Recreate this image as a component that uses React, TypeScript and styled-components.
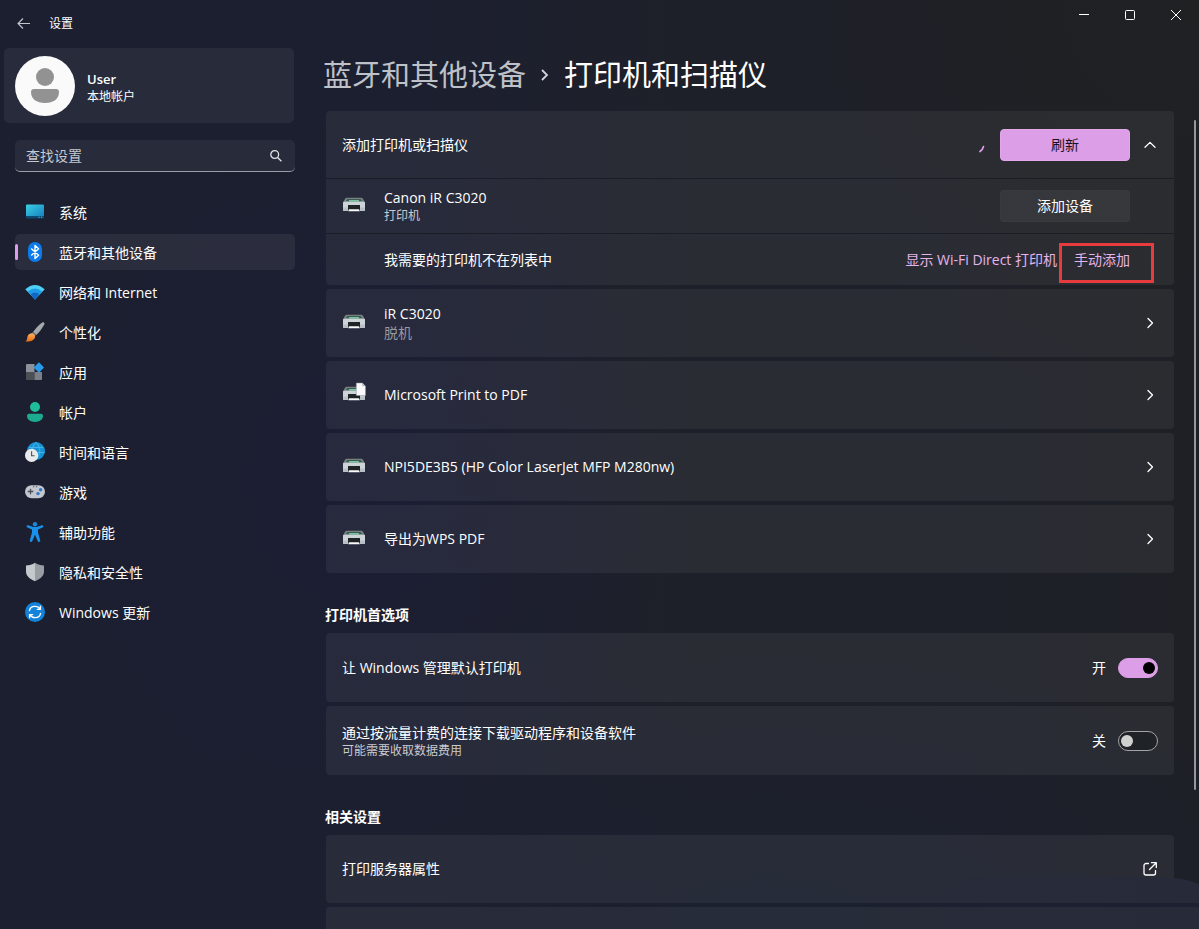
import React, { useState } from "react";
import styled, { createGlobalStyle } from "styled-components";

const colors = {
  text: "#ffffff",
  muted: "#c9cad0",
  dim: "#9798a2",
  accent: "#dc9ee6",
  link: "#e6b4ec",
  card: "rgba(255, 255, 255, 0.055)",
  line: "#1b1d26",
  mark: "#e83b3e",
};

const GlobalStyle = createGlobalStyle`
  *, *::before, *::after { box-sizing: border-box; }
  body {
    margin: 0;
    background: #1d1f2a;
    color: ${colors.text};
    font-family: "Open Sans", "Noto Sans CJK SC", sans-serif;
    font-size: 14px;
    line-height: 20px;
  }
  button, input { font: inherit; color: inherit; }
  h1, h2, p, ul { margin: 0; padding: 0; }
`;

const Window = styled.div`
  position: relative;
  display: flex;
  flex-direction: column;
  height: 100vh;
  overflow: hidden;
  background:
    radial-gradient(ellipse 50% 30% at 64% 100%, rgba(27, 32, 48, 0.9), transparent),
    radial-gradient(ellipse 26% 40% at 30% 52%, rgba(27, 29, 54, 0.6), transparent),
    radial-gradient(ellipse 35% 45% at 100% 0%, rgba(32, 33, 35, 1), transparent),
    linear-gradient(90deg, #1b1f30 0%, #1c1f2f 35%, #1e2029 58%, #1e2029 80%, #1e2026 100%);
`;

const TitleBar = styled.header`
  display: flex;
  justify-content: space-between;
  flex: none;
  height: 48px;
  padding-left: 12px;
`;

const TitleGroup = styled.div`
  display: flex;
  align-items: center;
  gap: 14px;
  font-size: 12px;
`;

const IconButton = styled.button<{ $width: number; $height: number }>`
  display: flex;
  align-items: center;
  justify-content: center;
  width: ${(p) => p.$width}px;
  height: ${(p) => p.$height}px;
  padding: 0;
  border: 0;
  background: none;
`;

const WindowControls = styled.div`
  display: flex;
`;

const Body = styled.div`
  display: flex;
  flex: 1;
  min-height: 0;
`;

const Sidebar = styled.aside`
  flex: none;
  width: 295px;
  padding-left: 15px;
`;

const Profile = styled.button`
  display: flex;
  align-items: center;
  gap: 12px;
  width: 290px;
  height: 75px;
  margin-left: -11px;
  padding: 0 11px;
  border: 0;
  border-radius: 5px;
  background: ${colors.card};
  text-align: left;
`;

const ProfileText = styled.span`
  display: flex;
  flex-direction: column;
  padding-top: 4px;
  font-size: 12px;
  line-height: 17px;

  strong { font-size: 13px; font-weight: 600; }
`;

const SearchBox = styled.label`
  display: flex;
  align-items: center;
  height: 32px;
  margin: 17px 0 22px;
  padding: 0 11px;
  border-bottom: 1px solid #9a9ca8;
  border-radius: 5px;
  background: ${colors.card};

  input {
    flex: 1;
    min-width: 0;
    padding: 0;
    border: 0;
    outline: 0;
    background: none;
  }
  input::placeholder { color: #c6c8d0; opacity: 1; }
`;

const NavList = styled.ul`
  display: flex;
  flex-direction: column;
  gap: 4px;
  list-style: none;
`;

const NavLink = styled.a<{ $active: boolean }>`
  position: relative;
  display: flex;
  align-items: center;
  gap: 14px;
  height: 36px;
  padding: 0 10px;
  border-radius: 5px;
  background: ${(p) => (p.$active ? "rgba(255, 255, 255, 0.065)" : "none")};
  color: inherit;
  text-decoration: none;

  span { padding-top: 2px; }

  &::before {
    content: "";
    display: ${(p) => (p.$active ? "block" : "none")};
    position: absolute;
    left: 0;
    top: 10px;
    width: 3px;
    height: 16px;
    border-radius: 2px;
    background: ${colors.accent};
  }
`;

const Main = styled.main`
  display: flex;
  flex-direction: column;
  flex: 1;
  min-width: 0;
  padding: 0 25px 0 31px;
`;

const Breadcrumb = styled.h1`
  display: flex;
  align-items: center;
  gap: 13px;
  flex: none;
  height: 63px;
  margin-left: -3px;
  padding-bottom: 10px;
  font-size: 29px;
  font-weight: 400;
  line-height: 40px;

  a { color: #bfc1c9; text-decoration: none; }
`;

const Stack = styled.section`
  display: flex;
  flex-direction: column;
  flex: none;
  gap: 4px;
`;

const SectionTitle = styled.h2`
  flex: none;
  margin-left: -1px;
  padding: 32px 0 8px;
  font-size: 14px;
  font-weight: 700;
  line-height: 20px;
`;

const Card = styled.div`
  flex: none;
  border-radius: 4px;
  background: ${colors.card};
`;

const Row = styled.div<{ $height: number; $inset?: boolean; $divided?: boolean }>`
  display: flex;
  align-items: center;
  height: ${(p) => p.$height}px;
  padding: 0 ${(p) => (p.$inset ? 44 : 16)}px 0 16px;
  border-bottom: ${(p) => (p.$divided ? `1px solid ${colors.line}` : "0")};
`;

const IconSlot = styled.span`
  display: flex;
  align-items: flex-start;
  flex: none;
  width: 24px;
  height: 30px;
  margin-right: 18px;
`;

const RowText = styled.div`
  flex: 1;
  min-width: 0;
`;

const Note = styled.p<{ $large?: boolean }>`
  color: ${(p) => (p.$large ? colors.dim : colors.muted)};
  font-size: ${(p) => (p.$large ? 14 : 12)}px;
  line-height: ${(p) => (p.$large ? 18 : 16)}px;
`;

const Actions = styled.div`
  display: flex;
  align-items: center;
  gap: 12px;
`;

const Links = styled.div`
  display: flex;
  gap: 17px;

  a { position: relative; color: ${colors.link}; text-decoration: none; }
`;

const Highlight = styled.span`
  position: absolute;
  inset: -7px -24px -13px -15px;
  border: 3px solid ${colors.mark};
`;

const PushButton = styled.button<{ $primary?: boolean }>`
  width: 130px;
  height: 32px;
  padding: 0;
  border: 1px solid ${(p) => (p.$primary ? "#e0a8e9" : "rgba(255, 255, 255, 0.02)")};
  border-radius: 4px;
  background: ${(p) => (p.$primary ? colors.accent : "rgba(255, 255, 255, 0.055)")};
  color: ${(p) => (p.$primary ? "#1a101c" : colors.text)};
`;

const SwitchLabel = styled.label`
  display: flex;
  align-items: center;
  gap: 12px;

  input {
    appearance: none;
    display: flex;
    align-items: center;
    width: 40px;
    height: 20px;
    margin: 0;
    padding: 0 2px;
    border: 1px solid #a2a4a8;
    border-radius: 10px;
    background: #1f2227;
  }
  input::before {
    content: "";
    width: 12px;
    height: 12px;
    border-radius: 50%;
    background: #cfd1d1;
  }
  input:checked {
    justify-content: flex-end;
    border-color: ${colors.accent};
    background: ${colors.accent};
  }
  input:checked::before { background: #000000; }
`;

const ScrollThumb = styled.div`
  position: absolute;
  top: 120px;
  right: 3px;
  bottom: 139px;
  width: 2px;
  border-radius: 1px;
  background: #97989c;
`;

const CornerGlow = styled.svg`
  position: absolute;
  right: 0;
  bottom: 0;
  pointer-events: none;
`;

const Chevron = ({ d }: { d: string }) => (
  <svg width="16" height="16" viewBox="0 0 16 16" fill="none" stroke="#fff" strokeWidth="1.3" strokeLinecap="round" strokeLinejoin="round" aria-hidden="true">
    <path d={d} />
  </svg>
);

const RIGHT = "M6 3.5 10.5 8 6 12.5";
const UP = "M3 10.3 8 5.4 13 10.3";

const Printer = ({ page }: { page?: boolean }) => (
  <svg width="24" height="28" viewBox="0 0 24 28" aria-hidden="true">
    <path d="M4.500 6.800h15a1.500 1.500 0 0 1 1.300.8L23 11.500H1l2.200-3.900a1.500 1.500 0 0 1 1.300-.8z" fill="#75827f" />
    <path d="M5.500 8h13l1.500 2H4z" fill="#3d5a52" />
    <path d="M7 9.200h10v1.200H7z" fill="#82e0b6" />
    <path d="M2 10.800h20a1 1 0 0 1 1 1V19a1 1 0 0 1-1 1H2a1 1 0 0 1-1-1v-7.200a1 1 0 0 1 1-1z" fill="#cdd4d8" />
    <path d="M1 16.500h22V19a1 1 0 0 1-1 1H2a1 1 0 0 1-1-1z" fill="#b9c0c6" />
    <path d="M6 14h12v6H6z" fill="#202427" />
    <path d="M7 18.300h10l.8 1.900H6.200z" fill="#f8fafa" />
    {page && <path d="M14.300 3h6l3.200 3.200v9.300h-9.200z" fill="#fafafa" stroke="#8b9096" strokeWidth=".5" />}
    {page && <path d="M20.300 3v3.200h3.200z" fill="#b9bdc2" />}
  </svg>
);

const navIcons: Record<string, React.ReactNode> = {
  system: (
    <>
      <path d="M2 2.500h16a1 1 0 0 1 1 1V15H1V3.500a1 1 0 0 1 1-1z" fill="url(#screen)" />
      <path d="M1 14h18v1.500a1 1 0 0 1-1 1H2a1 1 0 0 1-1-1z" fill="#0c4a70" />
      <path d="M13.500 14.700h1.200v1h-1.200zM16 14.700h1.200v1H16z" fill="#42c5ef" />
    </>
  ),
  bluetooth: (
    <>
      <rect x="3" y="0" width="14" height="20" rx="7" fill="#0a7cec" />
      <path d="m6.200 6.600 7.400 6.600L10 16.500v-13l3.600 3.300-7.400 6.600" fill="none" stroke="#fff" strokeWidth="1.400" strokeLinejoin="round" />
    </>
  ),
  network: (
    <>
      <path d="M.3 7.200Q10-1.400 19.700 7.200L10 17.500z" fill="#4ed0f5" />
      <path d="M2.900 9.600Q10 3.600 17.100 9.600L10 17.500z" fill="#1e9be6" />
      <path d="M5.600 12.400Q10 8.800 14.400 12.400L10 17.500z" fill="#1267c4" />
    </>
  ),
  personal: (
    <>
      <path d="M18.800.5c.8.500.9 1.300.4 2.200-2.500 4.300-5.300 8-8 10.300L8 10C10.800 6.200 14.300 2.700 17.200.6c.6-.4 1.100-.4 1.600-.1z" fill="#a5a8ab" />
      <path d="m8 10 3.200 3-1.400 1.300-3.300-3z" fill="#6d7176" />
      <path d="M6.700 11.200c2 0 3.800 1.700 3.300 4.100-.6 3.200-5.200 4.800-9.700 4.200 2.500-1.500 1.600-3.500 2.500-5.700.7-1.700 2.200-2.600 3.900-2.600z" fill="url(#paint)" />
    </>
  ),
  apps: (
    <>
      <path d="M2 2h7.500v8H1V3a1 1 0 0 1 1-1z" fill="#8c929b" />
      <path d="M1 10h8.500v8H2a1 1 0 0 1-1-1z" fill="#4c4f54" />
      <path d="M9.500 10H17v7a1 1 0 0 1-1 1H9.500z" fill="#7b8088" />
      <rect x="10.200" y="1.800" width="7.400" height="7.400" rx=".8" transform="rotate(45 13.900 5.500)" fill="#2a9bea" />
    </>
  ),
  account: (
    <>
      <circle cx="10" cy="5" r="5" fill="#20bd9b" />
      <path d="M4 11.800h12a2 2 0 0 1 2 2c0 4-3.500 6.200-8 6.200s-8-2.200-8-6.200a2 2 0 0 1 2-2z" fill="#1cab90" />
    </>
  ),
  time: (
    <>
      <circle cx="11" cy="9" r="9" fill="#1793d5" />
      <path d="M4 5.500h14M2.500 10.500h17M11 .2c-5 5-5 12 0 17.600M11 .2c5 5 5 12 0 17.600" fill="none" stroke="#4dbcea" strokeWidth=".8" />
      <circle cx="6.600" cy="13.400" r="6.600" fill="#e9eaec" />
      <path d="M6.600 9.300v4.500h3" fill="none" stroke="#4d5157" strokeWidth="1.100" />
    </>
  ),
  gaming: (
    <>
      <rect x="0" y="3.200" width="20" height="13" rx="6.500" fill="#c3c6cf" />
      <path d="M5.500 6.700v5.600M2.700 9.500h5.600" stroke="#4b4f57" strokeWidth="1.300" />
      <circle cx="15.600" cy="7.700" r="1.700" fill="#2f78c4" />
      <circle cx="13" cy="11.600" r="1.700" fill="#2f78c4" />
      <path d="M8 4.200h1.200v1H8zM11 4.200h1.200v1H11z" fill="#4b4f57" />
    </>
  ),
  access: (
    <>
      <circle cx="10" cy="2.300" r="2.200" fill="#1c86dd" />
      <path d="M3.200 3.300 8.300 5h3.400l5.100-1.700a1.200 1.200 0 0 1 .8 2.300L13 7.400v3.200l2.200 7.600a1.300 1.300 0 0 1-2.500.8L10 12.700 7.300 19a1.300 1.300 0 0 1-2.500-.8L7 10.600V7.400L2.400 5.600a1.200 1.200 0 0 1 .8-2.300z" fill="#1990ea" />
    </>
  ),
  privacy: (
    <>
      <path d="M10 .8c2.700 2 5.700 2.700 9 2.700v5.800c0 4.500-3.300 7.800-9 9.900z" fill="#989ea4" />
      <path d="M10 .8C7.300 2.800 4.300 3.500 1 3.500v5.800c0 4.500 3.300 7.800 9 9.900z" fill="#c5c9cc" />
    </>
  ),
  update: (
    <>
      <circle cx="10" cy="10" r="10" fill="#1482d8" />
      <path d="M4.300 9.200C4.700 6.200 7.200 4.400 10 4.400c2.100 0 4 1 5.100 2.800M15.700 10.800c-.4 3-2.900 4.800-5.700 4.800-2.100 0-4-1-5.100-2.800M15.400 3.800v3.600h-3.600M4.600 16.200v-3.600h3.600" fill="none" stroke="#fff" strokeWidth="1.300" />
    </>
  ),
};

const navItems = [
  { id: "system", label: "系统" },
  { id: "bluetooth", label: "蓝牙和其他设备" },
  { id: "network", label: "网络和 Internet" },
  { id: "personal", label: "个性化" },
  { id: "apps", label: "应用" },
  { id: "account", label: "帐户" },
  { id: "time", label: "时间和语言" },
  { id: "gaming", label: "游戏" },
  { id: "access", label: "辅助功能" },
  { id: "privacy", label: "隐私和安全性" },
  { id: "update", label: "Windows 更新" },
];

const printers = [
  { name: "iR C3020", status: "脱机" },
  { name: "Microsoft Print to PDF", page: true },
  { name: "NPI5DE3B5 (HP Color LaserJet MFP M280nw)" },
  { name: "导出为WPS PDF" },
];

const Switch = ({ name, initial }: { name: string; initial: boolean }) => {
  const [on, setOn] = useState(initial);
  return (
    <SwitchLabel>
      {on ? "开" : "关"}
      <input type="checkbox" role="switch" aria-label={name} checked={on} onChange={() => setOn(!on)} />
    </SwitchLabel>
  );
};

export default function App() {
  return (
    <Window>
      <GlobalStyle />
      <TitleBar>
        <TitleGroup>
          <IconButton type="button" aria-label="返回" $width={23} $height={24}>
            <svg width="14" height="12" viewBox="0 0 14 12" fill="none" stroke="#c4c6cd" strokeWidth="1.100">
              <path d="M13 5.500H1.200M6 .5 1 5.500l5 5" />
            </svg>
          </IconButton>
          设置
        </TitleGroup>
        <WindowControls>
          <IconButton type="button" aria-label="最小化" $width={46} $height={30}>
            <svg width="12" height="12" stroke="#fff"><path d="M1 5.500h10" /></svg>
          </IconButton>
          <IconButton type="button" aria-label="最大化" $width={46} $height={30}>
            <svg width="12" height="12" stroke="#fff" fill="none"><rect x="1.500" y="1.500" width="9" height="9" rx="1" /></svg>
          </IconButton>
          <IconButton type="button" aria-label="关闭" $width={46} $height={30}>
            <svg width="12" height="12" stroke="#fff"><path d="m1 1 10 10M11 1 1 11" /></svg>
          </IconButton>
        </WindowControls>
      </TitleBar>

      <Body>
        <Sidebar>
          <Profile type="button">
            <svg width="60" height="60" viewBox="0 0 60 60" aria-hidden="true">
              <circle cx="30" cy="30" r="30" fill="#fafafa" />
              <circle cx="30" cy="21" r="9" fill="#929292" />
              <path d="M19 33h22a3 3 0 0 1 3 3c0 7-5.500 11-14 11s-14-4-14-11a3 3 0 0 1 3-3z" fill="#929292" />
            </svg>
            <ProfileText>
              <strong>User</strong>
              本地帐户
            </ProfileText>
          </Profile>
          <SearchBox>
            <input type="text" placeholder="查找设置" aria-label="查找设置" />
            <svg width="16" height="16" viewBox="0 0 16 16" fill="none" stroke="#e4e5ea" strokeWidth="1.300" aria-hidden="true">
              <circle cx="6.700" cy="6.500" r="3.900" />
              <path d="m9.600 9.500 3.800 3.800" />
            </svg>
          </SearchBox>
          <nav>
            <svg width="0" height="0" display="block" aria-hidden="true">
              <linearGradient id="screen" x1="0" y1="0" x2="1" y2="1">
                <stop offset="0" stopColor="#3bd0e4" />
                <stop offset="1" stopColor="#1580bd" />
              </linearGradient>
              <linearGradient id="paint" x1="0" y1="0" x2="0" y2="1">
                <stop offset="0" stopColor="#fbb45c" />
                <stop offset="1" stopColor="#ea6a12" />
              </linearGradient>
            </svg>
            <NavList>
              {navItems.map((item) => (
                <li key={item.id}>
                  <NavLink href={`#${item.id}`} $active={item.id === "bluetooth"}>
                    <svg width="20" height="20" viewBox="0 0 20 20" aria-hidden="true">{navIcons[item.id]}</svg>
                    <span>{item.label}</span>
                  </NavLink>
                </li>
              ))}
            </NavList>
          </nav>
        </Sidebar>

        <Main>
          <Breadcrumb>
            <a href="#bluetooth">蓝牙和其他设备</a>
            <svg width="12" height="16" viewBox="0 0 12 16" fill="none" stroke="#d3d4da" strokeWidth="1.800" aria-hidden="true">
              <path d="M3 3 8 8l-5 5" />
            </svg>
            <span>打印机和扫描仪</span>
          </Breadcrumb>

          <Stack>
            <Card>
              <Row $height={68} $divided>
                <RowText>添加打印机或扫描仪</RowText>
                <Actions>
                  <svg width="12" height="20" viewBox="0 0 12 20" fill="none" stroke={colors.accent} strokeWidth="1.700" strokeLinecap="round" aria-hidden="true">
                    <path d="M7.500 11.500Q6.800 14.500 4 16.500" />
                  </svg>
                  <PushButton type="button" $primary>刷新</PushButton>
                  <Chevron d={UP} />
                </Actions>
              </Row>
              <Row $height={55} $inset $divided>
                <IconSlot><Printer /></IconSlot>
                <RowText>
                  <p>Canon iR C3020</p>
                  <Note>打印机</Note>
                </RowText>
                <PushButton type="button">添加设备</PushButton>
              </Row>
              <Row $height={51} $inset>
                <IconSlot />
                <RowText>我需要的打印机不在列表中</RowText>
                <Links>
                  <a href="#wifi-direct">显示 Wi-Fi Direct 打印机</a>
                  <a href="#manual">手动添加<Highlight /></a>
                </Links>
              </Row>
            </Card>
            {printers.map((printer) => (
              <Card key={printer.name}>
                <Row $height={68}>
                  <IconSlot><Printer page={printer.page} /></IconSlot>
                  <RowText>
                    <p>{printer.name}</p>
                    {printer.status && <Note $large>{printer.status}</Note>}
                  </RowText>
                  <Chevron d={RIGHT} />
                </Row>
              </Card>
            ))}
          </Stack>

          <SectionTitle>打印机首选项</SectionTitle>
          <Stack>
            <Card>
              <Row $height={69}>
                <RowText>让 Windows 管理默认打印机</RowText>
                <Switch name="让 Windows 管理默认打印机" initial={true} />
              </Row>
            </Card>
            <Card>
              <Row $height={69}>
                <RowText>
                  <p>通过按流量计费的连接下载驱动程序和设备软件</p>
                  <Note>可能需要收取数据费用</Note>
                </RowText>
                <Switch name="通过按流量计费的连接下载驱动程序和设备软件" initial={false} />
              </Row>
            </Card>
          </Stack>

          <SectionTitle>相关设置</SectionTitle>
          <Stack>
            <Card>
              <Row $height={68}>
                <RowText>打印服务器属性</RowText>
                <svg width="16" height="16" viewBox="0 0 16 16" fill="none" stroke="#fff" strokeWidth="1.300" strokeLinecap="round" strokeLinejoin="round" aria-hidden="true">
                  <path d="M6.500 2.500H4a2 2 0 0 0-2 2V12a2 2 0 0 0 2 2h7.500a2 2 0 0 0 2-2V9.500M9.500 1.700h4.800v4.800M14 2 7.500 8.500" />
                </svg>
              </Row>
            </Card>
            <Card>
              <Row $height={68} />
            </Card>
          </Stack>
        </Main>
      </Body>

      <ScrollThumb />
      <CornerGlow width="280" height="52" viewBox="0 0 280 52" aria-hidden="true">
        <defs>
          <linearGradient id="glow" x1="0" y1="0" x2="1" y2="0">
            <stop offset="0" stopColor="#272b3a" stopOpacity="0" />
            <stop offset=".3" stopColor="#272b3a" />
            <stop offset="1" stopColor="#272b39" />
          </linearGradient>
        </defs>
        <path d="M0 0H240Q262 0 280 7V52H0z" fill="url(#glow)" />
        <path d="M0 26H280V30H0z" fill="#1d2030" />
      </CornerGlow>
    </Window>
  );
}
